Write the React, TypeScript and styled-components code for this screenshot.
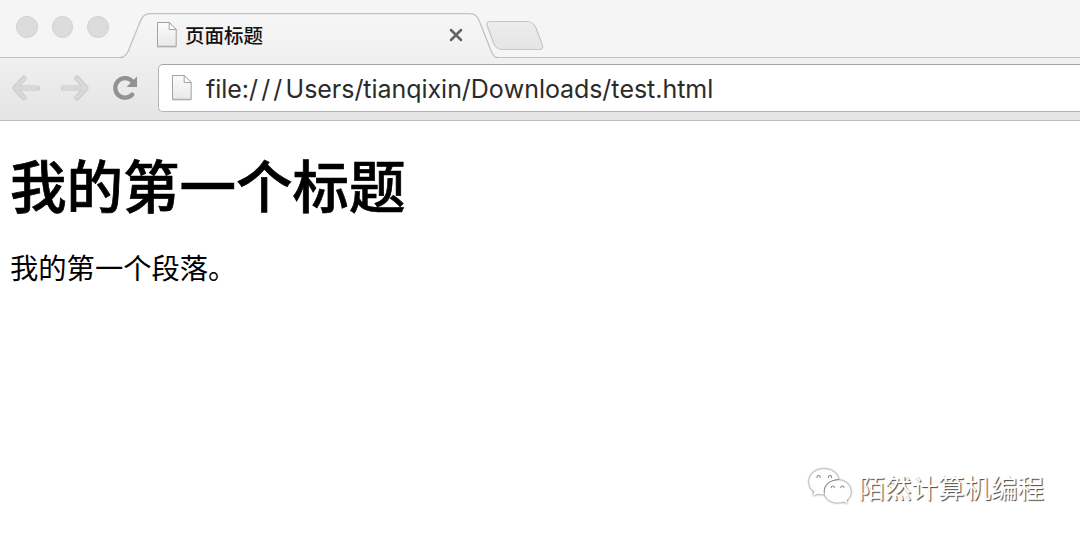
import styled, { createGlobalStyle } from "styled-components";

const cjk = `"Noto Sans CJK SC", sans-serif`;

const GlobalStyle = createGlobalStyle`
  body {
    margin: 0;
    background: #fff;
    overflow: hidden;
  }
`;

const PageIcon = ({ id }: { id: string }) => (
  <svg width="22" height="28" viewBox="0 0 22 28">
    <defs>
      <linearGradient id={id} x1="0" y1="0" x2="0" y2="1">
        <stop offset="0" stopColor="#fcfcfc" />
        <stop offset="1" stopColor="#e8e9ea" />
      </linearGradient>
    </defs>
    <path
      d="M1.5 1.5H13.2L20.2 8.5V25.3H1.5Z"
      fill={`url(#${id})`}
      stroke="#a2a2a2"
    />
    <path d="M13.2 1.5V8.5H20.2Z" fill="#fff" stroke="#a2a2a2" />
    <path d="M1 26.2H20.7" stroke="#8c8c8c" strokeOpacity="0.35" />
  </svg>
);

const TabShape = () => (
  <TabOutline width="376" height="46" viewBox="0 0 376 46">
    <defs>
      <linearGradient id="tabFill" x1="0" y1="0" x2="0" y2="1">
        <stop offset="0" stopColor="#f6f6f6" />
        <stop offset="1" stopColor="#f0f0f0" />
      </linearGradient>
    </defs>
    <path
      d="M-1 46V45.5C3 45.5 4 42 5.5 38.5L17 10C19.5 4 22 1.7 27 1.7H345C351 1.7 353 3.5 355.5 9.5L366 36C368.5 42 369.5 45.5 374 45.5V46Z"
      fill="url(#tabFill)"
    />
    <path
      d="M-4 45.5C0 45.5 2.5 43.5 4.5 38.5L16 10C18.5 3.7 21 1.7 27 1.7H345C351 1.7 353 3.5 355.5 9.5L366 36C368.5 42 369.5 45.5 374 45.5"
      fill="none"
      stroke="#c2c2c2"
      strokeWidth="1.3"
    />
  </TabOutline>
);

const NewTabIcon = () => (
  <svg width="60" height="32" viewBox="0 0 60 32">
    <defs>
      <linearGradient id="newTab" x1="0" y1="0" x2="0" y2="1">
        <stop offset="0" stopColor="#ededed" />
        <stop offset="1" stopColor="#e5e5e5" />
      </linearGradient>
    </defs>
    <path
      d="M5 1.5H42C47 1.5 49 3.5 51 8L57 24C58.5 28 57.5 29.5 54 29.5H18C13 29.5 10.5 28 8.5 23L2.5 6.5C1.5 3.5 2 1.5 5 1.5Z"
      fill="url(#newTab)"
      stroke="#c6c6c6"
      strokeWidth="1.2"
    />
  </svg>
);

const CloseIcon = () => (
  <svg width="14" height="14" viewBox="0 0 14 14">
    <path
      d="M2 2L12 12M12 2L2 12"
      stroke="#646464"
      strokeWidth="2.5"
      strokeLinecap="round"
    />
  </svg>
);

const ArrowIcon = () => (
  <svg width="30" height="28" viewBox="0 0 30 28">
    <path
      d="M13 4.3L4 14L13 23.7M4.5 14H26.5"
      fill="none"
      stroke="#c3c3c3"
      strokeWidth="5.2"
      strokeLinecap="round"
      strokeLinejoin="round"
    />
    <path
      d="M13 4.3L4 14L13 23.7M4.5 14H26.5"
      fill="none"
      stroke="#d8d8d8"
      strokeWidth="4"
      strokeLinecap="round"
      strokeLinejoin="round"
    />
  </svg>
);

const ReloadIcon = () => (
  <svg width="26" height="26" viewBox="0 0 26 26">
    <path
      d="M20.5 6.5A9.8 9.8 0 1 0 20.3 19.5"
      fill="none"
      stroke="#929292"
      strokeWidth="4.3"
      strokeLinecap="round"
    />
    <path d="M25 1.5V12H14.5Z" fill="#929292" />
  </svg>
);

const WeChatIcon = () => (
  <WeChatSvg width="44" height="38" viewBox="0 0 46 40">
    <path d="M16.5 1C7.5 1 1 7 1 14.5C1 19 3 22.5 6.5 25L5 29.5L10.5 27C13 28 15 28 18 28C16 20 22 12 32 12C30.5 5 24.5 1 16.5 1Z" />
    <path d="M31 12.5C23 12.5 17 18 17 24.5C17 31.5 23 36.5 31 36.5C33.5 36.5 35.5 36 37.5 35.5L41.5 37.5L40.5 34C43.5 31.5 45 28.5 45 24.5C45 18 39 12.5 31 12.5Z" />
    <g fill="none" stroke="#8c8c8c" strokeWidth="1.1">
      <path d="M17.2 27C15.5 19 22 12.5 32 12.3" />
      <path d="M9.5 10.5A1.7 1.7 0 1 1 12.5 10.5M21.5 10.5A1.7 1.7 0 1 1 24.5 10.5" />
      <path d="M24.5 21A1.6 1.6 0 1 1 27.5 21M34.5 21A1.6 1.6 0 1 1 37.5 21" />
    </g>
  </WeChatSvg>
);

const App = () => (
  <Window>
    <GlobalStyle />
    <TabStrip>
      <TrafficLights>
        <Light />
        <Light />
        <Light />
      </TrafficLights>
      <Tab>
        <TabShape />
        <PageIcon id="tabPage" />
        <TabTitle>页面标题</TabTitle>
        <CloseIcon />
      </Tab>
      <NewTab>
        <NewTabIcon />
      </NewTab>
    </TabStrip>
    <Toolbar>
      <NavButton>
        <ArrowIcon />
      </NavButton>
      <NavButton flipped>
        <ArrowIcon />
      </NavButton>
      <NavButton>
        <ReloadIcon />
      </NavButton>
      <AddressBar>
        <PageIcon id="addressPage" />
        <Url>
          file:<Slashes>///</Slashes>Users/tianqixin/Downloads/test.html
        </Url>
      </AddressBar>
    </Toolbar>
    <Content>
      <Heading>我的第一个标题</Heading>
      <Paragraph>我的第一个段落。</Paragraph>
      <Watermark>
        <WeChatIcon />
        <WatermarkText>陌然计算机编程</WatermarkText>
      </Watermark>
    </Content>
  </Window>
);

export default App;

const Window = styled.div`
  height: 536px;
  display: flex;
  flex-direction: column;
  overflow: hidden;
  background: #fff;

  svg {
    display: block;
    flex-shrink: 0;
  }
`;

const TabStrip = styled.div`
  height: 58px;
  box-sizing: border-box;
  display: flex;
  background: #f5f5f5;
  border-bottom: 1px solid #c2c2c2;
`;

const TrafficLights = styled.div`
  width: 111px;
  padding: 16px 0 0 16px;
  display: flex;
  gap: 14px;
`;

const Light = styled.span`
  width: 21.5px;
  height: 21.5px;
  box-sizing: border-box;
  border: 1px solid #d1d1d1;
  border-radius: 50%;
  background: #dcdcdc;
`;

const Tab = styled.div`
  position: relative;
  width: 366px;
  height: 46px;
  box-sizing: border-box;
  margin-top: 12px;
  padding: 0 30px 0 29px;
  display: flex;
  align-items: center;
`;

// one pixel taller than the strip so the fill runs into the toolbar
const TabOutline = styled.svg`
  position: absolute;
  left: -3px;
  top: 0;
  overflow: visible;

  & ~ * {
    position: relative;
  }
`;

const TabTitle = styled.span`
  flex: 1;
  margin-left: 7px;
  color: #111;
  font: 500 19.5px/28px ${cjk};
`;

const NewTab = styled.div`
  margin: 20px 0 0 -8px;
`;

const Toolbar = styled.div`
  height: 63px;
  box-sizing: border-box;
  padding: 6px 0 8px 11px;
  display: flex;
  background: linear-gradient(#f0f0f0, #e4e4e4);
  border-bottom: 1px solid #bdbdbd;
`;

const NavButton = styled.div<{ flipped?: boolean }>`
  width: ${(props) => (props.flipped ? "54px" : "46.5px")};
  height: 48px;
  display: flex;
  align-items: center;

  svg {
    transform: ${(props) => (props.flipped ? "scaleX(-1)" : "none")};
    margin-left: ${(props) => (props.flipped ? "2px" : "0")};
  }
`;

const AddressBar = styled.div`
  flex: 1;
  height: 48px;
  box-sizing: border-box;
  padding-left: 12px;
  display: flex;
  align-items: center;
  background: #fff;
  border: 1px solid #b4b4b4;
  border-top-color: #a3a3a3;
  border-right: 0;
  border-radius: 5px 0 0 5px;
`;

const Url = styled.span`
  margin: 2px 0 0 13px;
  color: #2b2b2b;
  font: 400 25px/30px Inter, sans-serif;
  font-kerning: none;
  letter-spacing: -0.04px;
  white-space: nowrap;
`;

const Slashes = styled.span`
  letter-spacing: 3.2px;
`;

const Content = styled.main`
  position: relative;
  flex: 1;
  padding: 20px 10px;
  color: #000;
`;

const Heading = styled.h1`
  margin: 0;
  font: 500 56.5px/84px ${cjk};
  -webkit-text-stroke: 0.7px #000;
`;

const Paragraph = styled.p`
  margin: 22px 0 0;
  font: 400 28.3px/40px ${cjk};
`;

const Watermark = styled.div`
  position: absolute;
  right: 36px;
  bottom: 29px;
  display: flex;
  align-items: center;
  gap: 7px;
`;

const WeChatSvg = styled.svg`
  fill: #fff;
  overflow: visible;
  filter: drop-shadow(0 0.8px 0.8px #444);
`;

const WatermarkText = styled.span`
  color: #fff;
  font: 400 26.5px/40px ${cjk};
  text-shadow: 1px 1px 1px #444;
`;
